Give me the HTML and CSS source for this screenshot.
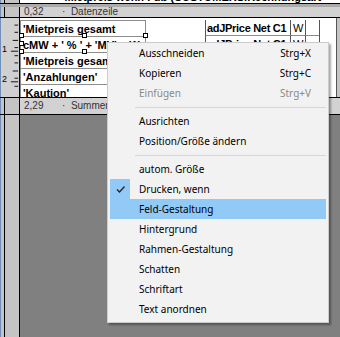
FILE: index.html
```html
<!DOCTYPE html>
<html lang="de">
<head>
<meta charset="utf-8">
<title>Report Designer</title>
<link rel="stylesheet" href="styles.css">
</head>
<body>
<div class="screen">
  <div class="row clip-row">
    <div class="gut"><div class="gut-in"></div></div>
    <div class="clip-body"><span class="cliptext">'Mietpreis wenn Fuß (CUSTOMERS.Rechnungsart  ' + Wa    ' ON</span></div>
  </div>
  <div class="row band band-top">
    <div class="gut"><div class="gut-in"></div></div>
    <div class="band-body"><span class="bnum">0,32</span><span class="blbl">·&nbsp; Datenzeile</span></div>
  </div>
  <div class="row section">
    <div class="gut ruler-gut">
      <svg class="ruler" width="20" height="79" viewBox="0 0 20 79">
        <g stroke="#000" stroke-width="1">
          <line x1="15" y1="3.5" x2="19" y2="3.5"/>
          <line x1="15" y1="11.5" x2="19" y2="11.5"/>
          <line x1="13" y1="20.5" x2="19" y2="20.5"/>
          <line x1="15" y1="28.5" x2="19" y2="28.5"/>
          <line x1="11" y1="32.5" x2="19" y2="32.5"/>
          <line x1="15" y1="37.5" x2="19" y2="37.5"/>
          <line x1="15" y1="45.5" x2="19" y2="45.5"/>
          <line x1="13" y1="54.5" x2="19" y2="54.5"/>
          <line x1="15" y1="62.5" x2="19" y2="62.5"/>
          <line x1="11" y1="66.5" x2="19" y2="66.5"/>
          <line x1="15" y1="71.5" x2="19" y2="71.5"/>
        </g>
        <text x="1" y="33" class="rnum">1</text>
        <text x="1" y="67" class="rnum">2</text>
      </svg>
    </div>
    <div class="canvas">
      <div class="fields">
        <div class="fld">'Mietpreis gesamt</div>
        <div class="fld">cMW + ' % ' + 'MV' + Wert</div>
        <div class="fld">'Mietpreis gesamt</div>
        <div class="fld">'Anzahlungen'</div>
        <div class="fld">'Kaution'</div>
        <span class="h" style="left:-1px;top:13px"></span>
        <span class="h" style="left:62px;top:13px"></span>
        <span class="h" style="left:123px;top:13px"></span>
        <span class="h" style="left:-1px;top:21px"></span>
        <span class="h" style="left:-1px;top:29px"></span>
        <span class="h" style="left:62px;top:29px"></span>
      </div>
      <div class="rtable">
        <div class="rc c1 bold">adJPrice Net C1</div>
        <div class="rc c2">W</div>
        <div class="rc c3"></div>
        <div class="rc c1 bold">adJPrice Net C1</div>
        <div class="rc c2">W</div>
        <div class="rc c3"></div>
      </div>
    </div>
    <div class="rstrip"></div>
  </div>
  <div class="row band band-bottom">
    <div class="gut"><div class="gut-in"></div></div>
    <div class="band-body"><span class="bnum">2,29</span><span class="blbl">·&nbsp; Summenzeile</span></div>
  </div>
  <div class="row rest">
    <div class="gut"><div class="gut-in"></div></div>
    <div class="rest-body"></div>
  </div>

  <div class="menu">
    <div class="mi"><span class="mt">Ausschneiden</span><span class="ms">Strg+X</span></div>
    <div class="mi"><span class="mt">Kopieren</span><span class="ms">Strg+C</span></div>
    <div class="mi dis"><span class="mt">Einfügen</span><span class="ms">Strg+V</span></div>
    <div class="sep"></div>
    <div class="mi"><span class="mt">Ausrichten</span></div>
    <div class="mi"><span class="mt">Position/Größe ändern</span></div>
    <div class="sep"></div>
    <div class="mi"><span class="mt">autom. Größe</span></div>
    <div class="mi checked">
      <span class="chk"><svg width="20" height="20" viewBox="0 0 20 20"><polyline points="7,10.5 9.5,13 14.5,7.5" fill="none" stroke="#222" stroke-width="1.3"/></svg></span>
      <span class="mt">Drucken, wenn</span>
    </div>
    <div class="mi hl"><span class="mt">Feld-Gestaltung</span></div>
    <div class="mi"><span class="mt">Hintergrund</span></div>
    <div class="mi"><span class="mt">Rahmen-Gestaltung</span></div>
    <div class="mi"><span class="mt">Schatten</span></div>
    <div class="mi"><span class="mt">Schriftart</span></div>
    <div class="mi"><span class="mt">Text anordnen</span></div>
  </div>
</div>
</body>
</html>
```
FILE: styles.css
```css
html, body {
  margin: 0;
  padding: 0;
}
body {
  background: #808080;
  width: 340px;
  height: 337px;
  overflow: hidden;
  font-family: "Liberation Sans", Arial, sans-serif;
}
.screen {
  position: relative;
  width: 340px;
  height: 337px;
  display: flex;
  flex-direction: column;
  overflow: hidden;
}
.row {
  display: flex;
  flex: none;
}
.gut {
  width: 20px;
  flex: none;
  box-sizing: border-box;
  border-left: 1px solid #6f8fb8;
  padding-left: 3px;
  background: #c4c4c4;
  display: flex;
}
.gut-in {
  flex: 1;
  border-left: 1px solid #000;
  border-right: 1px solid #000;
  background: #c4c4c4;
}

/* clipped line of the previous section */
.clip-row {
  height: 3px;
}
.clip-body {
  flex: 1;
  background: #fff;
  overflow: hidden;
}
.cliptext {
  display: block;
  margin-top: -9px;
  margin-left: 42px;
  font: bold 11px/12px "Liberation Sans", Arial, sans-serif;
  white-space: nowrap;
  color: #000;
}

/* bands */
.band {
  border-top: 1px solid #000;
  border-bottom: 1px solid #000;
}
.band-body {
  flex: 1;
  background: #d2d2d2;
  font: 10px "Liberation Sans", Arial, sans-serif;
  color: #333;
  padding-left: 4px;
  display: flex;
  white-space: nowrap;
}
.band-top .band-body {
  border-top: 3px solid #ababab;
  height: 10px;
  line-height: 10px;
}
.band-top .gut {
  border-top: 3px solid #ababab;
}
.band-bottom {
  border-top: none;
}
.band-bottom .band-body {
  height: 16px;
  line-height: 16px;
}
.bnum {
  width: 38px;
}

/* section */
.section {
  height: 80px;
  border-bottom: 1px solid #000;
  box-sizing: border-box;
}
.ruler-gut {
  padding-left: 0;
  background: #d0d0d0;
  border-right: 1px solid #000;
}
.ruler {
  display: block;
}
.rnum {
  font: 10px "Liberation Sans", Arial, sans-serif;
  fill: #000;
}
.canvas {
  flex: 1;
  background: #fff;
  display: flex;
  align-items: flex-start;
  padding-top: 2px;
  border-right: 1px solid #555;
  overflow: hidden;
}
.rstrip {
  width: 3px;
  background: #c4c4c4;
}
.fields {
  position: relative;
  width: 126px;
  flex: none;
}
.fld {
  box-sizing: border-box;
  width: 126px;
  height: 16px;
  border: 1px solid #8c8c8c;
  border-bottom: none;
  padding-left: 2px;
  font: bold 11px/16px "Liberation Sans", Arial, sans-serif;
  color: #000;
  white-space: nowrap;
  overflow: hidden;
}
.h {
  position: absolute;
  width: 5px;
  height: 5px;
  box-sizing: border-box;
  border: 1px solid #000;
  background: #fff;
}
.rtable {
  margin-left: 59px;
  display: grid;
  grid-template-columns: 85px 15px 14px;
  border-right: 1px solid #555;
}
.rc {
  box-sizing: border-box;
  height: 16px;
  border-left: 1px solid #555;
  border-bottom: 1px solid #8c8c8c;
  font: 11px/16px "Liberation Sans", Arial, sans-serif;
  color: #000;
  white-space: nowrap;
  overflow: hidden;
}
.rc.bold {
  font-weight: bold;
  padding-left: 1px;
  letter-spacing: -0.3px;
}
.rc.c2 {
  padding-left: 2px;
}

/* rest */
.rest {
  flex: 1;
}
.rest-body {
  flex: 1;
  background: #808080;
}

/* context menu */
.menu {
  position: absolute;
  left: 107px;
  top: 42px;
  width: 222px;
  box-sizing: border-box;
  background: #f2f2f2;
  border: 1px solid #cccccc;
  padding: 0 2px 3px 2px;
  box-shadow: 2px 2px 2px rgba(0, 0, 0, 0.35);
  font-family: "Noto Sans", "Open Sans", sans-serif;
  font-size: 10px;
  color: #000;
}
.mi {
  height: 20px;
  display: flex;
  align-items: center;
  padding-left: 29px;
  padding-right: 15px;
  white-space: nowrap;
  position: relative;
}
.ms {
  margin-left: auto;
}
.mi.dis {
  color: #8a8a8a;
}
.mi.hl {
  background: #91c9f7;
}
.chk {
  position: absolute;
  left: 0;
  top: 0;
  width: 20px;
  height: 20px;
  background: #91c9f7;
}
.chk svg {
  display: block;
}
.sep {
  height: 8px;
  display: flex;
  align-items: center;
  padding-left: 25px;
}
.sep::before {
  content: "";
  flex: 1;
  border-top: 1px solid #d7d7d7;
}
```
